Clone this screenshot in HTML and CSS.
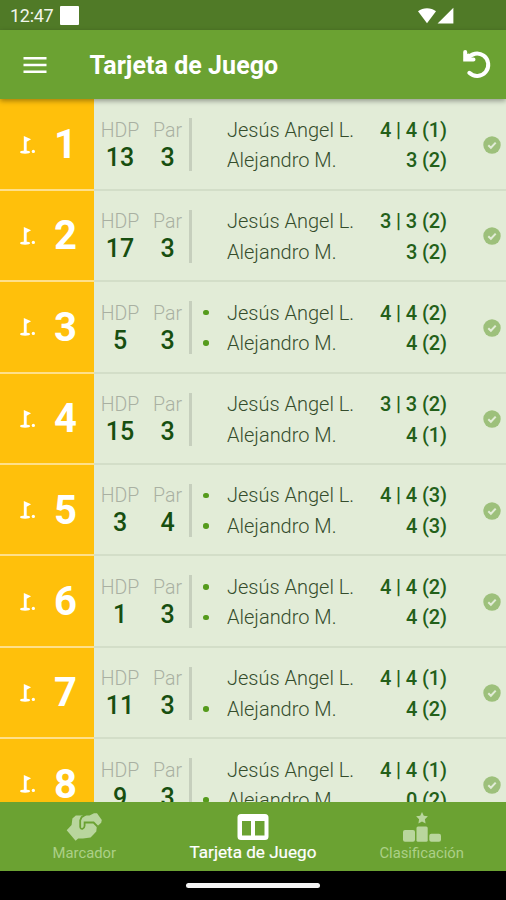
FILE: index.html
```
<!DOCTYPE html>
<html lang="es">
<head>
<meta charset="utf-8">
<title>Tarjeta de Juego</title>
<link rel="stylesheet" href="styles.css">
</head>
<body>
<svg class="defs" aria-hidden="true">
  <symbol id="flag" viewBox="0 0 16 20">
    <ellipse cx="5.3" cy="17.4" rx="5.3" ry="1.7"/>
    <path d="M4 .5 11.6 4 7 6.6V17H4Z"/>
    <circle cx="14" cy="16.8" r="1.7"/>
  </symbol>
  <symbol id="check" viewBox="0 0 18 18">
    <circle class="check-disc" cx="9" cy="9" r="8.7"/>
    <path class="check-mark" d="m5.3 9.2 2.6 2.6 4.8-5.2"/>
  </symbol>
</svg>
<div class="phone">
  <div class="status">
    <span class="clock">12:47</span><span class="notice"></span>
    <svg class="signals" viewBox="0 0 38 18"><path d="M1 4.2C6 .2 14 .2 19 4.2L10 16.2Z"/><path d="M36.4.8V16.6H20.6Z"/></svg>
  </div>
  <header class="bar">
    <svg class="menu" viewBox="0 0 24 18"><path d="M.5 2.2h23M.5 9h23M.5 15.8h23"/></svg>
    <h1>Tarjeta de Juego</h1>
    <svg class="undo" viewBox="0 0 30 30"><path d="M5.6 9.7A11.2 11.2 0 1 1 7.3 23.8"/><path class="head" d="M3.2 3V10.5H11.5M3.2 10.5 6.5 6.5"/></svg>
  </header>
  <main class="holes" id="holes"></main>
  <nav class="tabs">
    <div class="tab">
      <svg class="hands" viewBox="0 0 36 30"><path d="M.7 18.2 5.6 13 6.4 6.4 9.8 3.6H18L23.5 3.6 28 1.2 31 1.2 35.8 8 35.2 10.8 30.8 14.8 30.3 19.6 27 23 24.5 25.5 17 26.6 12.2 26.6 9.6 28.8Z"/><path class="gap" d="M19.8 2.5 15.6 5.2 14.2 8.4V15C14.6 18.2 18.4 17.2 18.6 13.8V10.5H27.6L31.5 14.5"/></svg>
      <span>Marcador</span>
    </div>
    <div class="tab active">
      <svg class="card" viewBox="0 0 32 28"><path fill-rule="evenodd" d="M4 1H28Q31.5 1 31.5 4.5V23.5Q31.5 27 28 27H4Q.5 27 .5 23.5V4.5Q.5 1 4 1ZM5 8V22.5H14V8ZM18 8V22.5H27.5V8Z"/></svg>
      <span>Tarjeta de Juego</span>
    </div>
    <div class="tab">
      <svg class="podium" viewBox="0 0 38 30"><path d="m19 0 1.8 3.7 4.1.6-3 2.9.7 4.2L19 9.5l-3.6 1.9.7-4.2-3-2.9 4.1-.6Z"/><rect x="0" y="18" width="12" height="11.8" rx="2"/><rect x="13.5" y="14.5" width="11.2" height="15.3" rx="1.5"/><rect x="26.3" y="21.8" width="11.7" height="8" rx="2"/></svg>
      <span>Clasificación</span>
    </div>
  </nav>
  <div class="gesture"><span></span></div>
</div>
<script src="script.js"></script>
</body>
</html>
```
FILE: styles.css
```
* { box-sizing: border-box; }
body { margin: 0; font-family: Roboto, "Liberation Sans", sans-serif; }
.defs { position: absolute; width: 0; height: 0; }
.phone { display: flex; flex-direction: column; width: 506px; height: 900px; overflow: hidden; background: #000; }
.status { display: flex; align-items: center; flex: 0 0 30px; padding: 1px 51px 0 10px; background: #507a27; color: #f1f6eb; }
.clock { width: 50px; font-size: 18px; letter-spacing: -.3px; }
.notice { width: 19px; height: 19px; border-radius: 1px; background: #fff; }
.signals { width: 38px; height: 18px; margin-left: auto; fill: #fff; }
.bar { display: flex; align-items: center; flex: 0 0 69px; padding: 0 14px 0 23px; background: #6ba232; color: #fff; box-shadow: 0 2px 5px rgba(0,0,0,.35); z-index: 1; }
.menu { width: 24px; height: 18px; stroke: #fff; stroke-width: 2.6; }
.bar h1 { margin: 1px 0 0 42.5px; font-size: 25px; font-weight: 700; letter-spacing: .05px; }
.undo { width: 30px; height: 30px; margin: -1px 0 0 auto; fill: none; stroke: #fff; stroke-width: 4; stroke-linecap: round; }
.undo .head { stroke-linejoin: miter; stroke-width: 4; }
.holes { flex: 1; min-height: 0; overflow: hidden; padding-top: .4px; background: #e2ecd7; }
.row { display: grid; grid-template-columns: 94px 52px 43px 2.5px 35.5px 1fr 59px; height: 91.4px; border-bottom: 2px solid #d3dec8; }
.hole { display: flex; align-items: center; height: 91.4px; padding: 1px 0 0 20px; background: #ffc00b; border-bottom: 2px solid #ffe08a; color: #fff; font-size: 40px; font-weight: 700; }
.hole svg { width: 16px; height: 20px; fill: #fff; }
.hole span { width: 60px; margin-left: 1.5px; text-align: center; }
.stat { padding-top: 18.4px; text-align: center; }
.stat span { display: block; height: 26px; color: #a9b0a2; font-size: 19.5px; font-weight: 300; line-height: 26px; }
.stat b { display: block; color: #174f10; font-size: 25px; font-weight: 500; line-height: 28px; }
.rule { height: 53px; margin-top: 19px; background: #c6cfbd; }
.marks, .players { padding-top: 15.5px; }
.mark { display: block; height: 30.6px; padding: 12.2px 0 0 11.5px; }
.mark.on::before { content: ""; display: block; width: 5.6px; height: 5.6px; border-radius: 50%; background: #559b1c; }
.player { display: flex; justify-content: space-between; height: 30.6px; line-height: 30.6px; font-size: 20px; }
.player span { color: #354d2c; font-weight: 300; white-space: nowrap; }
.player b { color: #236019; font-weight: 500; letter-spacing: -.1px; white-space: nowrap; }
.done { align-self: center; justify-self: end; width: 18px; height: 18px; margin: 0 5px 0 0; }
.check-disc { fill: #9dc07b; }
.check-mark { fill: none; stroke: #e2ecd7; stroke-width: 2; }
.tabs { display: grid; grid-template-columns: repeat(3, 1fr); flex: 0 0 69px; background: #6ba232; }
.tab { display: flex; flex-direction: column; align-items: center; padding-top: 10px; color: #acd087; fill: #b9d69d; font-size: 14.8px; }
.tab span { line-height: 20px; white-space: nowrap; }
.tab svg { margin-bottom: 1px; }
.tab.active { color: #fff; fill: #fff; font-size: 17.1px; -webkit-text-stroke: .2px #fff; }
.hands { width: 36px; height: 30px; }
.gap { fill: none; stroke: #6ba232; stroke-width: 1.8; }
.card { width: 32px; height: 28px; margin-top: 1px; }
.podium { width: 38px; height: 30px; }
.gesture { flex: 0 0 29px; display: flex; justify-content: center; padding-top: 12px; }
.gesture span { width: 134px; height: 5px; border-radius: 3px; background: #f4f4f4; }
```
FILE: script.js
```
const holes = [
  { hdp: 13, par: 3, marks: [0, 0], scores: ["4 | 4 (1)", "3 (2)"] },
  { hdp: 17, par: 3, marks: [0, 0], scores: ["3 | 3 (2)", "3 (2)"] },
  { hdp: 5, par: 3, marks: [1, 1], scores: ["4 | 4 (2)", "4 (2)"] },
  { hdp: 15, par: 3, marks: [0, 0], scores: ["3 | 3 (2)", "4 (1)"] },
  { hdp: 3, par: 4, marks: [1, 1], scores: ["4 | 4 (3)", "4 (3)"] },
  { hdp: 1, par: 3, marks: [1, 1], scores: ["4 | 4 (2)", "4 (2)"] },
  { hdp: 11, par: 3, marks: [0, 1], scores: ["4 | 4 (1)", "4 (2)"] },
  { hdp: 9, par: 3, marks: [0, 1], scores: ["4 | 4 (1)", "0 (2)"] }
];
const players = ["Jesús Angel L.", "Alejandro M."];

document.getElementById("holes").innerHTML = holes.map((h, i) => `
  <section class="row">
    <div class="hole"><svg><use href="#flag"/></svg><span>${i + 1}</span></div>
    <div class="stat"><span>HDP</span><b>${h.hdp}</b></div>
    <div class="stat"><span>Par</span><b>${h.par}</b></div>
    <div class="rule"></div>
    <div class="marks">${h.marks.map(m => `<i class="mark${m ? " on" : ""}"></i>`).join("")}</div>
    <div class="players">${players.map((p, j) => `<div class="player"><span>${p}</span><b>${h.scores[j]}</b></div>`).join("")}</div>
    <svg class="done"><use href="#check"/></svg>
  </section>`).join("");
```
